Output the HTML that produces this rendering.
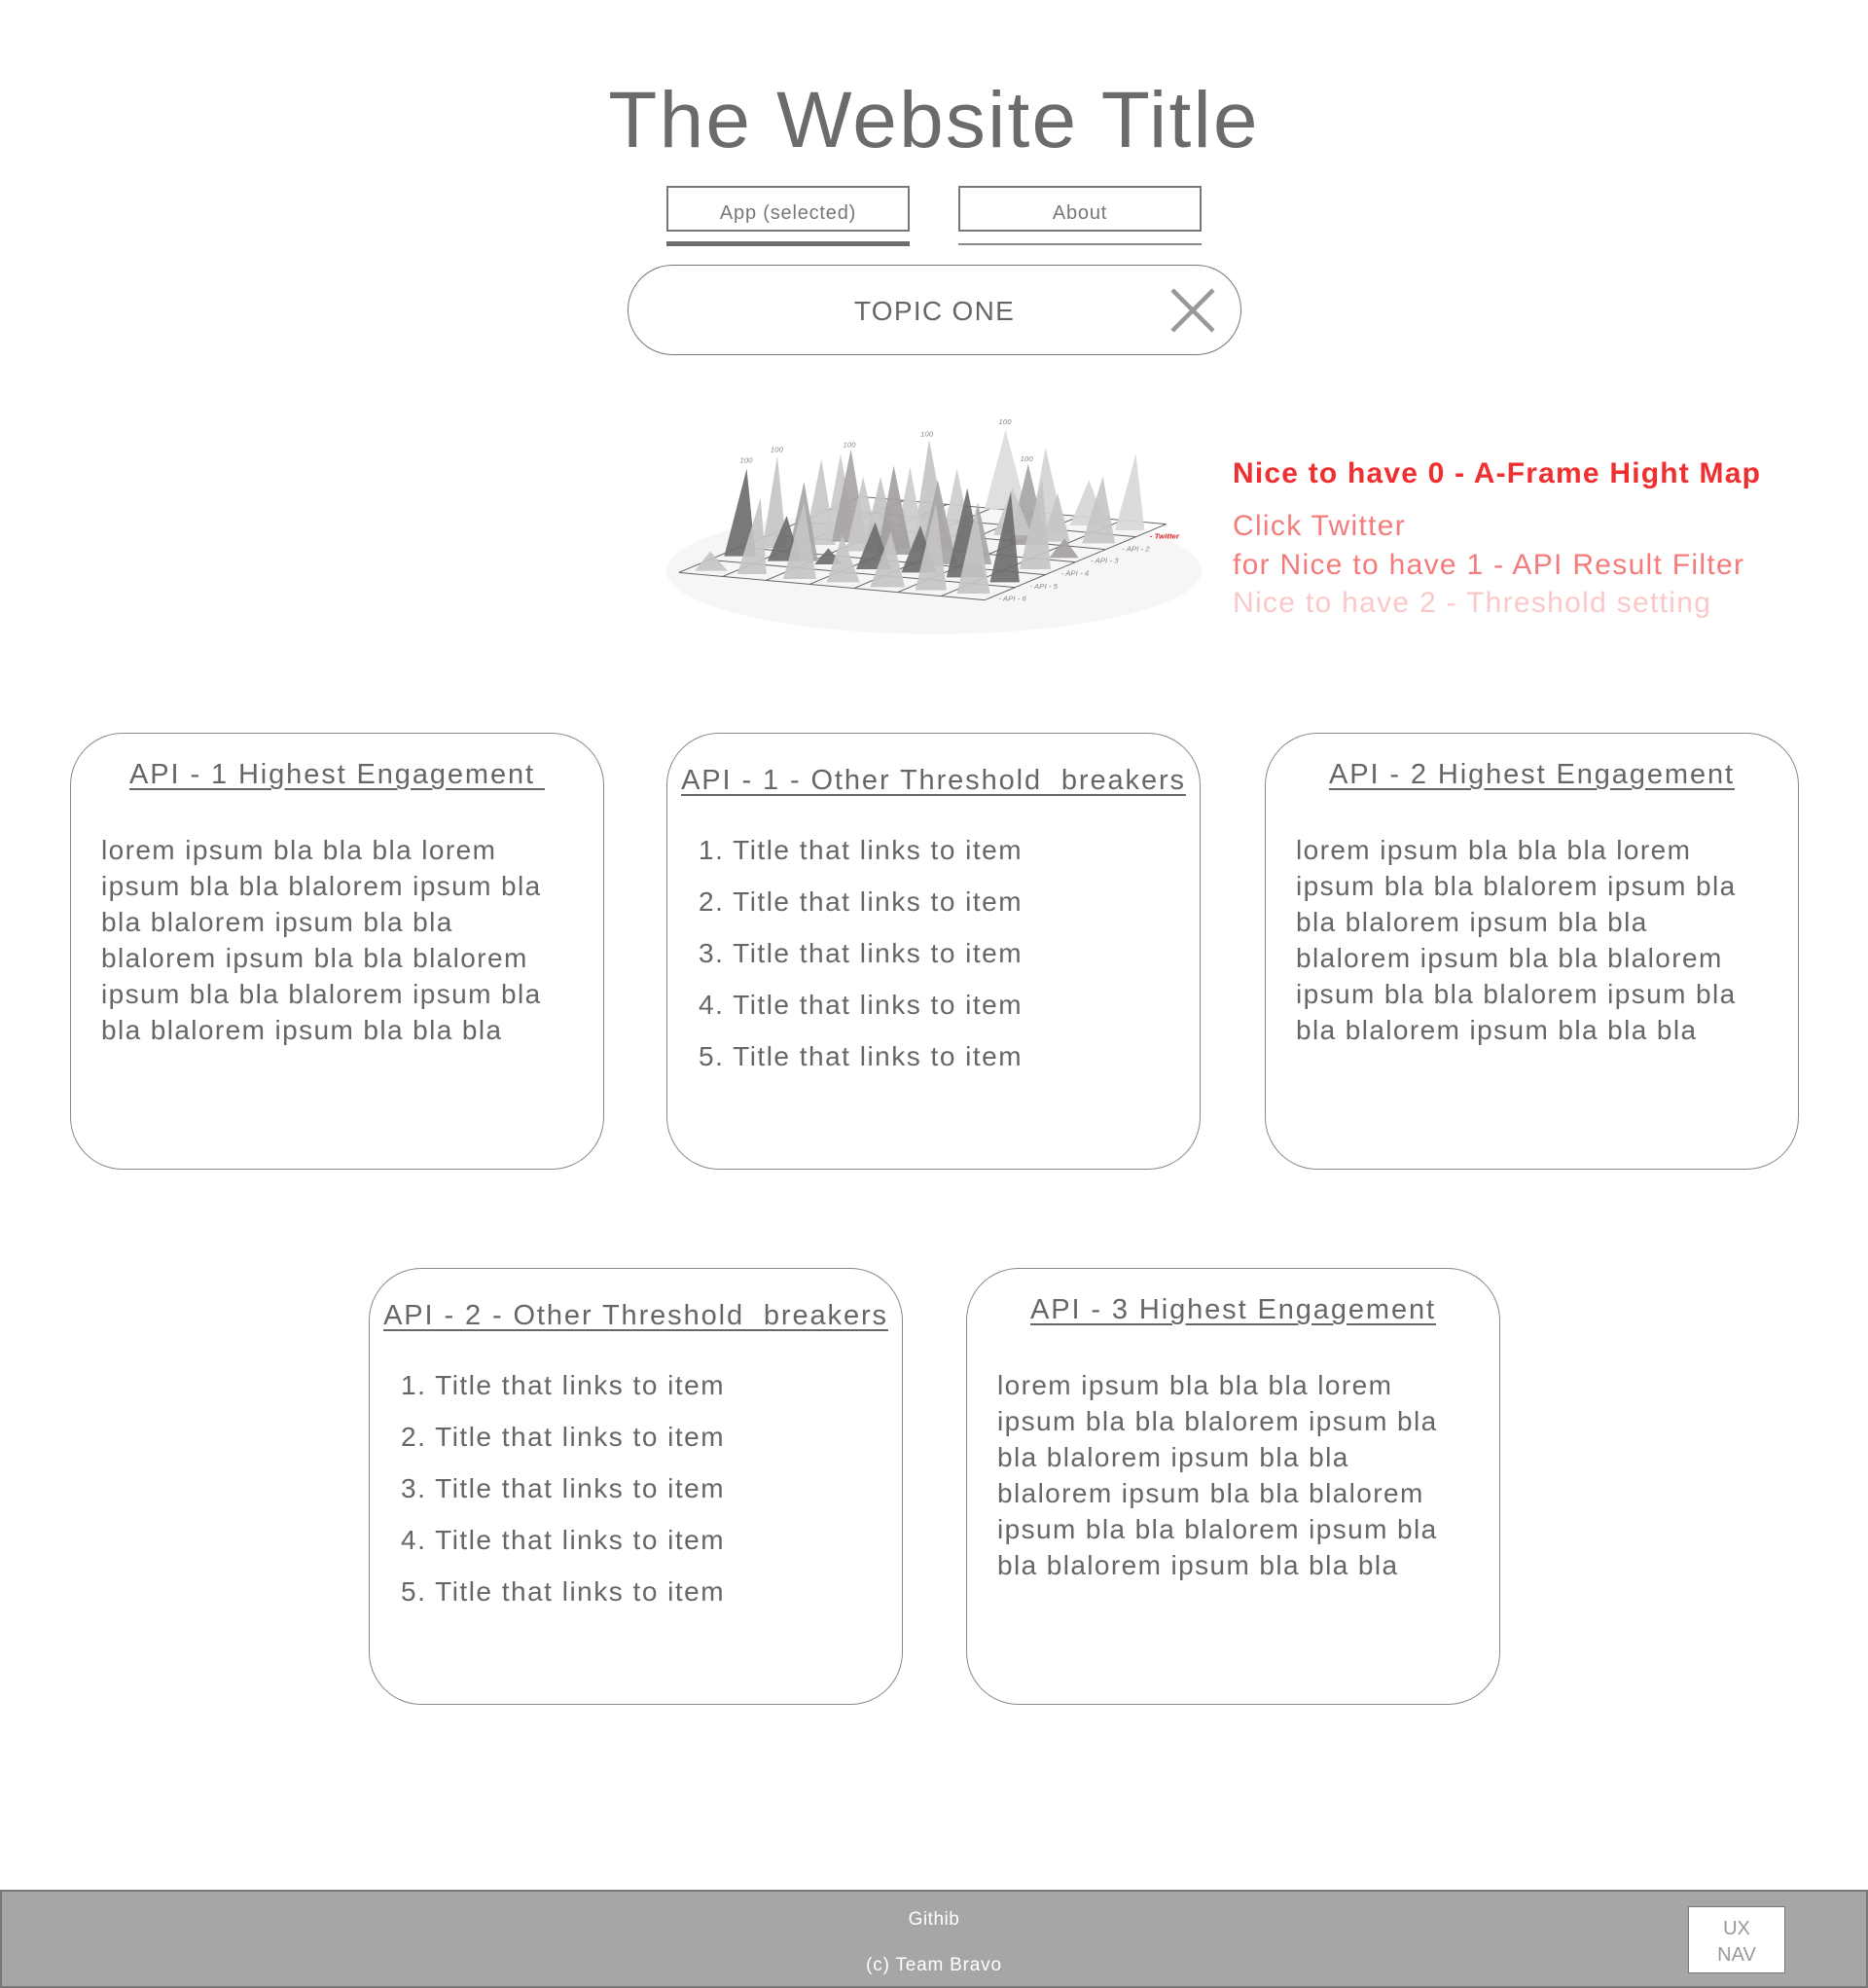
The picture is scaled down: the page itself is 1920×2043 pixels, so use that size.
<!DOCTYPE html>
<html><head><meta charset="utf-8"><style>
*{margin:0;padding:0;box-sizing:border-box}
body{width:1920px;height:2043px;position:relative;background:#fff;font-family:"Liberation Sans","DejaVu Sans",sans-serif;color:#666;overflow:hidden}
.a{position:absolute;white-space:nowrap}
.title{left:0;width:1920px;text-align:center;top:74px;font-size:82px;line-height:100px;color:#6b6b6b;letter-spacing:2.2px}
.tab{border:2px solid #777;height:47px;width:250px;text-align:center;font-size:20px;line-height:43px;color:#777;letter-spacing:.8px;padding-top:5px}
.card{position:absolute;border:1.5px solid #888;border-radius:54px;width:549px;height:449px}
.ct{position:absolute;left:0;width:100%;text-align:center;font-size:29px;line-height:36px;text-decoration:underline;text-decoration-thickness:2px;text-underline-offset:5px;letter-spacing:1.9px;color:#666}
.body{position:absolute;left:31px;font-size:28px;line-height:37px;letter-spacing:1.4px;white-space:nowrap}
.li{position:absolute;left:32px;font-size:28px;line-height:36px;letter-spacing:1.5px;white-space:nowrap}
.red{left:1267px;font-size:30px;line-height:40px;letter-spacing:1.3px}
</style></head><body>
<div class="a title">The Website Title</div>
<div class="a tab" style="left:685px;top:191px">App (selected)</div>
<div class="a" style="left:685px;top:248px;width:250px;height:5px;background:#6e6e6e"></div>
<div class="a tab" style="left:985px;top:191px">About</div>
<div class="a" style="left:985px;top:250px;width:250px;height:2px;background:#888"></div>

<div class="a" style="left:645px;top:272px;width:631px;height:93px;border:1.5px solid #777;border-radius:47px"></div>
<div class="a" style="left:645px;width:631px;text-align:center;top:302px;font-size:28px;line-height:36px;letter-spacing:1.3px;color:#666">TOPIC ONE</div>
<svg class="a" style="left:1200px;top:292px" width="54" height="54" viewBox="0 0 54 54"><path d="M5 6L47 48M47 6L5 48" stroke="#999" stroke-width="4.5"/></svg>

<svg class="a" style="left:680px;top:420px" width="560" height="240" viewBox="0 0 1568 720" preserveAspectRatio="none">
<ellipse cx="784" cy="500" rx="770" ry="195" fill="#f6f6f6"/>
<g stroke="#666" stroke-width="3" fill="none">
<path d="M50 505L930 590M137 466L1017 551M224 427L1104 512M311 388L1191 473M398 349L1278 434M485 310L1365 395M572 271L1452 356"/>
<path d="M50 505L572 271M176 517L698 283M301 529L823 295M427 541L949 307M553 554L1075 320M679 566L1201 332M804 578L1326 344M930 590L1452 356"/>
</g>
<g fill-opacity=".92">
<path d="M990 65L930 310L1050 310Z" fill="#dcdcdc"/>
<path d="M1105 120L1060 380L1160 380Z" fill="#d4d4d4"/>
<path d="M1365 140L1305 375L1390 375Z" fill="#d8d8d8"/>
<path d="M1230 220L1175 360L1280 360Z" fill="#d6d6d6"/>
<path d="M460 155L410 420L500 420Z" fill="#c8c8c8"/>
<path d="M515 140L470 400L560 400Z" fill="#cacaca"/>
<path d="M545 125L490 410L590 410Z" fill="#a9a5a5"/>
<path d="M333 145L290 430L360 430Z" fill="#c6c6c6"/>
<path d="M770 95L720 440L830 440Z" fill="#c4c4c4"/>
<path d="M715 180L670 430L760 430Z" fill="#cccccc"/>
<path d="M850 185L800 440L900 440Z" fill="#cdcdcd"/>
<path d="M1055 170L1000 420L1110 420Z" fill="#a9a5a5"/>
<path d="M1010 245L955 390L1065 390Z" fill="#c8c8c8"/>
<path d="M580 210L530 440L630 440Z" fill="#c8c8c8"/>
<path d="M630 210L580 430L680 430Z" fill="#c4c4c4"/>
<path d="M668 175L620 450L720 450Z" fill="#a4a0a0"/>
<path d="M245 185L180 455L270 455Z" fill="#6e6e6e"/>
<path d="M410 225L360 470L450 470Z" fill="#a9a5a5"/>
<path d="M795 220L740 480L850 480Z" fill="#a9a5a5"/>
<path d="M1140 260L1095 410L1175 410Z" fill="#c6c6c6"/>
<path d="M1270 210L1210 415L1305 415Z" fill="#c6c6c6"/>
<path d="M360 330L305 470L400 470Z" fill="#6e6e6e"/>
<path d="M880 245L820 520L930 520Z" fill="#6e6e6e"/>
<path d="M910 290L870 480L950 480Z" fill="#a9a5a5"/>
<path d="M1005 255L945 535L1030 535Z" fill="#6e6e6e"/>
<path d="M1095 215L1030 495L1120 495Z" fill="#c4c4c4"/>
<path d="M1160 400L1115 460L1200 460Z" fill="#a4a0a0"/>
<path d="M480 430L440 480L520 480Z" fill="#6e6e6e"/>
<path d="M615 350L560 495L660 495Z" fill="#6e6e6e"/>
<path d="M745 360L690 505L790 505Z" fill="#6e6e6e"/>
<path d="M140 440L95 500L190 500Z" fill="#c4c4c4"/>
<path d="M285 275L218 510L302 510Z" fill="#c4c4c4"/>
<path d="M410 290L350 525L445 525Z" fill="#c4c4c4"/>
<path d="M520 390L475 535L570 535Z" fill="#c4c4c4"/>
<path d="M660 380L600 550L700 550Z" fill="#c4c4c4"/>
<path d="M790 290L730 560L820 560Z" fill="#c4c4c4"/>
<path d="M905 310L850 570L945 570Z" fill="#c4c4c4"/>
</g>
<g font-family="Liberation Sans,sans-serif" font-size="22" font-style="italic" fill="#888">
<text x="225" y="167">100</text><text x="313" y="134">100</text><text x="522" y="118">100</text><text x="745" y="85">100</text><text x="970" y="48">100</text><text x="1032" y="162">100</text>
<text x="970" y="593">- API - 6</text><text x="1060" y="555">- API - 5</text><text x="1150" y="515">- API - 4</text><text x="1235" y="475">- API - 3</text><text x="1325" y="440">- API - 2</text>
<text x="1405" y="400" fill="#e02020" font-weight="bold">- Twitter</text>
</g>
</svg>

<div class="a red" style="top:467px;color:#f03030;font-weight:bold;letter-spacing:1.2px">Nice to have 0 - A-Frame Hight Map</div>
<div class="a red" style="top:521px;color:#f37b7b">Click Twitter</div>
<div class="a red" style="top:561px;color:#f37b7b">for Nice to have 1 - API Result Filter</div>
<div class="a red" style="top:600px;color:#fbc8c8">Nice to have 2 - Threshold setting</div>

<div class="card" style="left:72px;top:753px">
<div class="ct" style="top:24px">API - 1 Highest Engagement&nbsp;</div>
<div class="body" style="top:101px">lorem ipsum bla bla bla lorem<br>ipsum bla bla blalorem ipsum bla<br>bla blalorem ipsum bla bla<br>blalorem ipsum bla bla blalorem<br>ipsum bla bla blalorem ipsum bla<br>bla blalorem ipsum bla bla bla</div>
</div>
<div class="card" style="left:685px;top:753px">
<div class="ct" style="top:30px">API - 1 - Other Threshold &nbsp;breakers</div>
<div class="li" style="top:102px">1. Title that links to item</div>
<div class="li" style="top:155px">2. Title that links to item</div>
<div class="li" style="top:208px">3. Title that links to item</div>
<div class="li" style="top:261px">4. Title that links to item</div>
<div class="li" style="top:314px">5. Title that links to item</div>
</div>
<div class="card" style="left:1300px;top:753px">
<div class="ct" style="top:24px">API - 2 Highest Engagement</div>
<div class="body" style="top:101px">lorem ipsum bla bla bla lorem<br>ipsum bla bla blalorem ipsum bla<br>bla blalorem ipsum bla bla<br>blalorem ipsum bla bla blalorem<br>ipsum bla bla blalorem ipsum bla<br>bla blalorem ipsum bla bla bla</div>
</div>
<div class="card" style="left:379px;top:1303px">
<div class="ct" style="top:30px">API - 2 - Other Threshold &nbsp;breakers</div>
<div class="li" style="top:102px">1. Title that links to item</div>
<div class="li" style="top:155px">2. Title that links to item</div>
<div class="li" style="top:208px">3. Title that links to item</div>
<div class="li" style="top:261px">4. Title that links to item</div>
<div class="li" style="top:314px">5. Title that links to item</div>
</div>
<div class="card" style="left:993px;top:1303px">
<div class="ct" style="top:24px">API - 3 Highest Engagement</div>
<div class="body" style="top:101px">lorem ipsum bla bla bla lorem<br>ipsum bla bla blalorem ipsum bla<br>bla blalorem ipsum bla bla<br>blalorem ipsum bla bla blalorem<br>ipsum bla bla blalorem ipsum bla<br>bla blalorem ipsum bla bla bla</div>
</div>

<div class="a" style="left:0;top:1942px;width:1920px;height:101px;background:#a6a6a6;border:2px solid #777"></div>
<div class="a" style="left:0;width:1920px;text-align:center;top:1961px;font-size:19px;line-height:24px;color:#fff;letter-spacing:.5px">Githib</div>
<div class="a" style="left:0;width:1920px;text-align:center;top:2008px;font-size:19px;line-height:24px;color:#fff;letter-spacing:.8px">(c) Team Bravo</div>
<div class="a" style="left:1735px;top:1959px;width:100px;height:69px;background:#fff;border:1.5px solid #777;text-align:center;font-size:20px;line-height:27px;color:#999;padding-top:9px">UX<br>NAV</div>
</body></html>
